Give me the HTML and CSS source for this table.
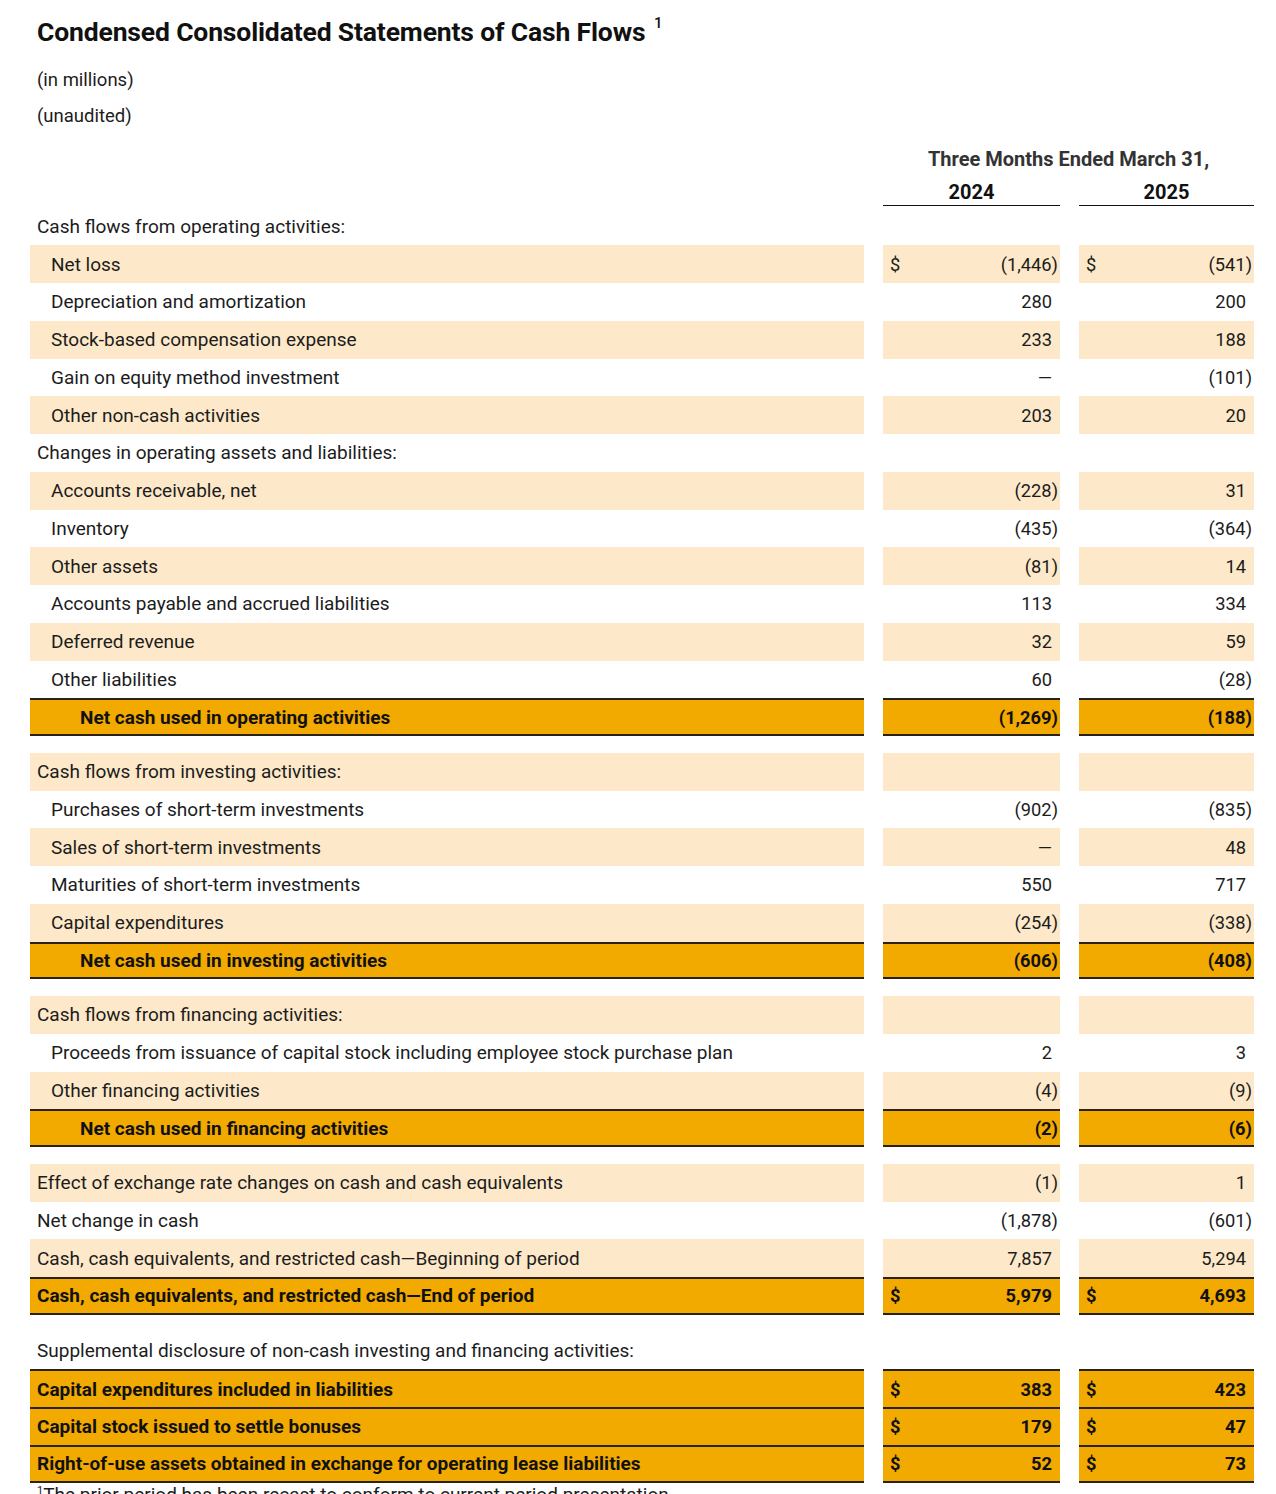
FILE: index.html
```html
<!DOCTYPE html>
<html lang="en">
<head>
<meta charset="utf-8">
<title>Condensed Consolidated Statements of Cash Flows</title>
<link rel="stylesheet" href="styles.css">
</head>
<body>
<div class="page">
  <h1 class="title">Condensed Consolidated Statements of Cash Flows <sup>1</sup></h1>
  <p class="sub">(in millions)</p>
  <p class="sub">(unaudited)</p>

  <div class="statement">
    <div class="row head1">
      <div class="lab"></div>
      <div class="span2">Three Months Ended March 31,</div>
    </div>
    <div class="row head2">
      <div class="lab"></div>
      <div class="yr">2024</div>
      <div class="yr">2025</div>
    </div>

    <div class="body">
    <div class="row"><div class="lab">Cash flows from operating activities:</div><div class="num"></div><div class="num"></div></div>
    <div class="row sh"><div class="lab ind">Net loss</div><div class="num"><span class="cur">$</span><span>(1,446)</span></div><div class="num"><span class="cur">$</span><span>(541)</span></div></div>
    <div class="row"><div class="lab ind">Depreciation and amortization</div><div class="num"><span class="p">280</span></div><div class="num"><span class="p">200</span></div></div>
    <div class="row sh"><div class="lab ind">Stock-based compensation expense</div><div class="num"><span class="p">233</span></div><div class="num"><span class="p">188</span></div></div>
    <div class="row"><div class="lab ind">Gain on equity method investment</div><div class="num"><span class="p">—</span></div><div class="num"><span>(101)</span></div></div>
    <div class="row sh"><div class="lab ind">Other non-cash activities</div><div class="num"><span class="p">203</span></div><div class="num"><span class="p">20</span></div></div>
    <div class="row"><div class="lab">Changes in operating assets and liabilities:</div><div class="num"></div><div class="num"></div></div>
    <div class="row sh"><div class="lab ind">Accounts receivable, net</div><div class="num"><span>(228)</span></div><div class="num"><span class="p">31</span></div></div>
    <div class="row"><div class="lab ind">Inventory</div><div class="num"><span>(435)</span></div><div class="num"><span>(364)</span></div></div>
    <div class="row sh"><div class="lab ind">Other assets</div><div class="num"><span>(81)</span></div><div class="num"><span class="p">14</span></div></div>
    <div class="row"><div class="lab ind">Accounts payable and accrued liabilities</div><div class="num"><span class="p">113</span></div><div class="num"><span class="p">334</span></div></div>
    <div class="row sh"><div class="lab ind">Deferred revenue</div><div class="num"><span class="p">32</span></div><div class="num"><span class="p">59</span></div></div>
    <div class="row"><div class="lab ind">Other liabilities</div><div class="num"><span class="p">60</span></div><div class="num"><span>(28)</span></div></div>
    <div class="row tot"><div class="lab sub2">Net cash used in operating activities</div><div class="num"><span>(1,269)</span></div><div class="num"><span>(188)</span></div></div>

    <div class="spacer"></div>

    <div class="row sh"><div class="lab">Cash flows from investing activities:</div><div class="num"></div><div class="num"></div></div>
    <div class="row"><div class="lab ind">Purchases of short-term investments</div><div class="num"><span>(902)</span></div><div class="num"><span>(835)</span></div></div>
    <div class="row sh"><div class="lab ind">Sales of short-term investments</div><div class="num"><span class="p">—</span></div><div class="num"><span class="p">48</span></div></div>
    <div class="row"><div class="lab ind">Maturities of short-term investments</div><div class="num"><span class="p">550</span></div><div class="num"><span class="p">717</span></div></div>
    <div class="row sh"><div class="lab ind">Capital expenditures</div><div class="num"><span>(254)</span></div><div class="num"><span>(338)</span></div></div>
    <div class="row tot"><div class="lab sub2">Net cash used in investing activities</div><div class="num"><span>(606)</span></div><div class="num"><span>(408)</span></div></div>

    <div class="spacer"></div>

    <div class="row sh"><div class="lab">Cash flows from financing activities:</div><div class="num"></div><div class="num"></div></div>
    <div class="row"><div class="lab ind">Proceeds from issuance of capital stock including employee stock purchase plan</div><div class="num"><span class="p">2</span></div><div class="num"><span class="p">3</span></div></div>
    <div class="row sh"><div class="lab ind">Other financing activities</div><div class="num"><span>(4)</span></div><div class="num"><span>(9)</span></div></div>
    <div class="row tot"><div class="lab sub2">Net cash used in financing activities</div><div class="num"><span>(2)</span></div><div class="num"><span>(6)</span></div></div>

    <div class="spacer"></div>

    <div class="row sh"><div class="lab">Effect of exchange rate changes on cash and cash equivalents</div><div class="num"><span>(1)</span></div><div class="num"><span class="p">1</span></div></div>
    <div class="row"><div class="lab">Net change in cash</div><div class="num"><span>(1,878)</span></div><div class="num"><span>(601)</span></div></div>
    <div class="row sh"><div class="lab">Cash, cash equivalents, and restricted cash—Beginning of period</div><div class="num"><span class="p">7,857</span></div><div class="num"><span class="p">5,294</span></div></div>
    <div class="row tot"><div class="lab">Cash, cash equivalents, and restricted cash—End of period</div><div class="num"><span class="cur">$</span><span class="p">5,979</span></div><div class="num"><span class="cur">$</span><span class="p">4,693</span></div></div>

    <div class="spacer"></div>

    <div class="row"><div class="lab">Supplemental disclosure of non-cash investing and financing activities:</div><div class="num"></div><div class="num"></div></div>
    <div class="row tot sup"><div class="lab">Capital expenditures included in liabilities</div><div class="num"><span class="cur">$</span><span class="p">383</span></div><div class="num"><span class="cur">$</span><span class="p">423</span></div></div>
    <div class="row tot sup"><div class="lab">Capital stock issued to settle bonuses</div><div class="num"><span class="cur">$</span><span class="p">179</span></div><div class="num"><span class="cur">$</span><span class="p">47</span></div></div>
    <div class="row tot sup last"><div class="lab">Right-of-use assets obtained in exchange for operating lease liabilities</div><div class="num"><span class="cur">$</span><span class="p">52</span></div><div class="num"><span class="cur">$</span><span class="p">73</span></div></div>
    </div>
  </div>

  <p class="foot"><sup>1</sup>The prior period has been recast to conform to current period presentation.</p>
</div>
</body>
</html>
```

FILE: styles.css
```css
* { box-sizing: border-box; }

html, body {
  margin: 0;
  padding: 0;
  background: #ffffff;
}

body {
  font-family: Roboto, "Liberation Sans", sans-serif;
  color: #1c1c1c;
  font-size: 19px;
}

.page {
  padding: 16px 0 0 30px;
  width: 1276px;
}

.title {
  margin: 0 0 14px 7px;
  font-size: 26.5px;
  line-height: 32px;
  font-weight: 700;
  color: #111;
  letter-spacing: -0.15px;
}

.title sup {
  font-size: 15px;
  font-weight: 500;
  vertical-align: 13px;
  line-height: 0;
  margin-left: 2px;
}

.sub {
  margin: 0 0 0 7px;
  line-height: 36px;
  font-size: 18.5px;
}

.statement {
  margin-top: 7px;
  width: 1224px;
}

.row {
  display: grid;
  grid-template-columns: 834px 177px 175px;
  column-gap: 19px;
  height: 37.75px;
}

.row > div {
  display: flex;
  align-items: center;
}

.head1 {
  height: 35px;
}

.span2 {
  grid-column: 2 / 4;
  justify-content: center;
  font-size: 20px;
  font-weight: 700;
  color: #333;
}

.head2 {
  height: 30px;
}

.yr {
  justify-content: center;
  font-size: 20px;
  font-weight: 700;
  color: #111;
  border-bottom: 1px solid #111;
  padding-top: 3px;
}

.body {
  padding-top: 1.5px;
}

.lab {
  padding-left: 7px;
}

.lab.ind {
  padding-left: 21px;
}

.lab.sub2 {
  padding-left: 50px;
}

.num {
  justify-content: space-between;
  padding: 0 2px 0 7px;
  font-size: 18.3px;
}

.num span:last-child {
  margin-left: auto;
}

.num .p {
  padding-right: 6px;
}

.sh > div {
  background: #fde9c9;
}

.tot > div {
  background: #f2a900;
  font-weight: 700;
  color: #111;
  border-top: 2px solid #2a2213;
  border-bottom: 2px solid #2a2213;
}

.sup > div {
  border-bottom: none;
}

.sup.last > div {
  border-bottom: 2px solid #2a2213;
}

.spacer {
  height: 16.75px;
}

.foot {
  margin: 0 0 0 7px;
  font-size: 19px;
  line-height: 22px;
  padding-top: 1px;
}

.foot sup {
  font-size: 11px;
  vertical-align: 7px;
  line-height: 0;
}
```
